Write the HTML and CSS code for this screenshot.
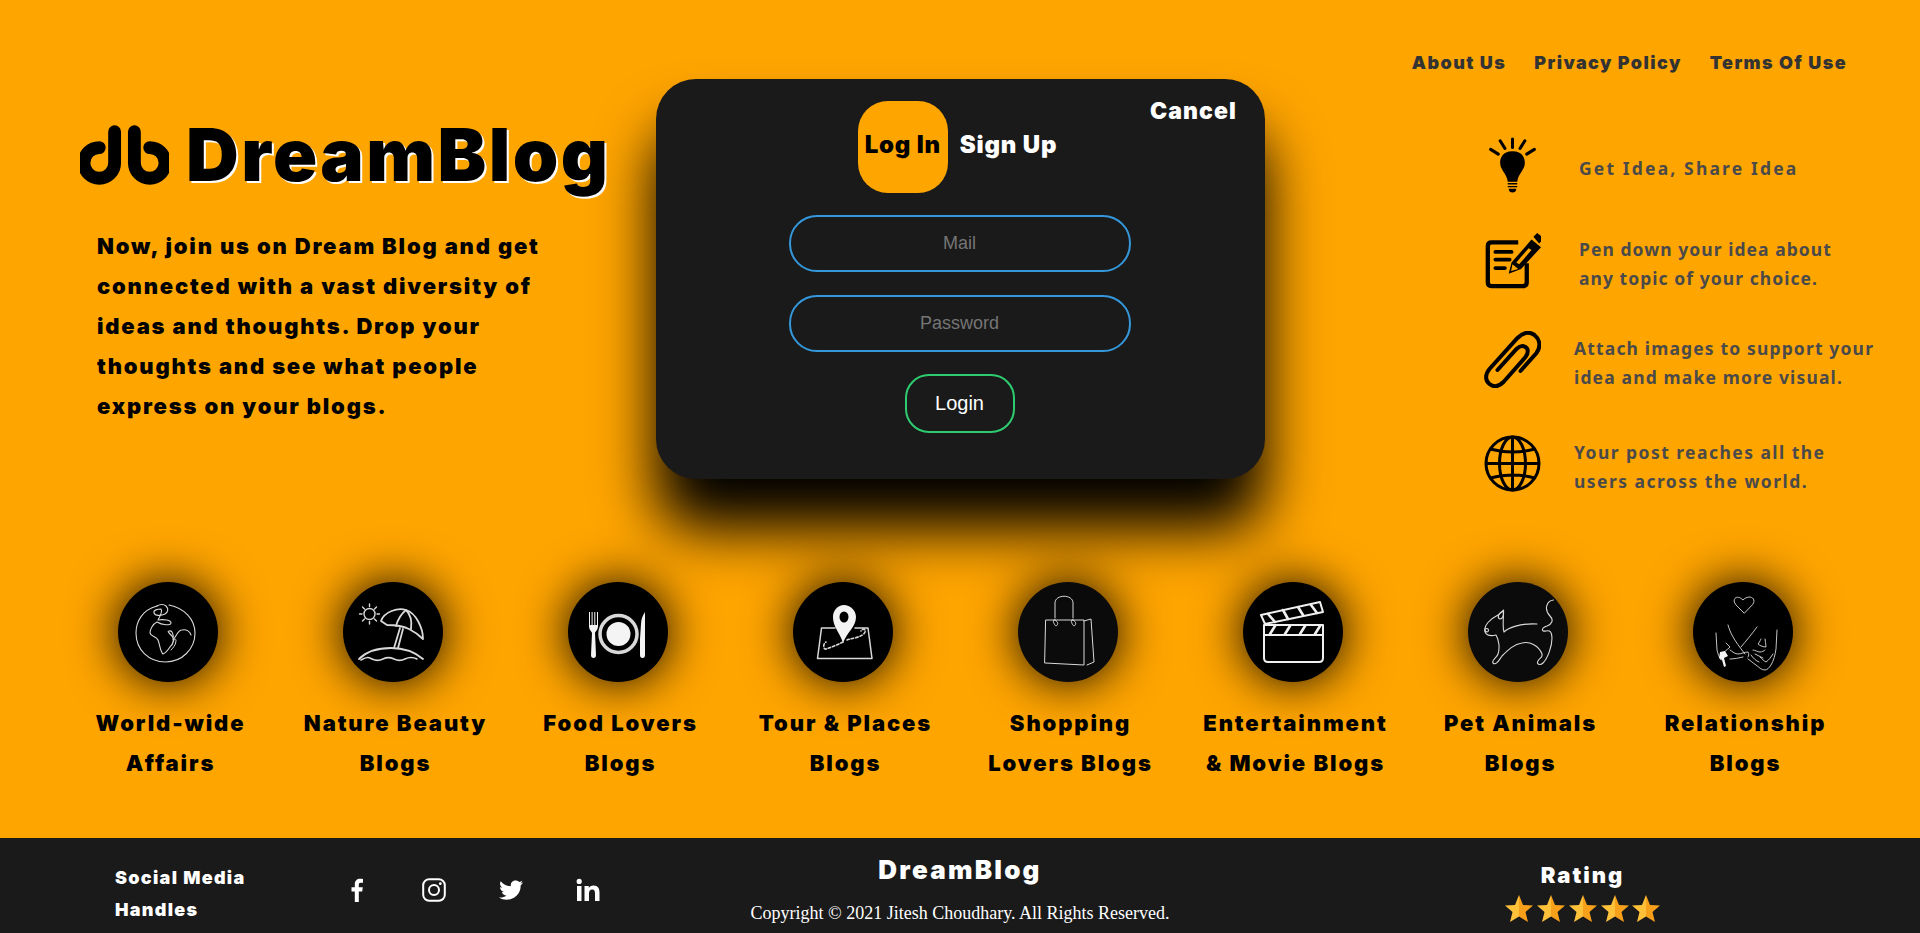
FILE: index.html
```html
<!DOCTYPE html>
<html lang="en">
<head>
<meta charset="utf-8">
<title>DreamBlog</title>
<link rel="stylesheet" href="styles.css">
</head>
<body>
<div class="page">
  <main class="top">
    <section class="intro">
      <div class="brand">
        <svg class="brand-mark" viewBox="0 0 90 60"><path d="M35 6.500V38A15.500 15.500 0 1 1 19.500 22.500M55 6.500V38A15.500 15.500 0 1 0 70.500 22.500" fill="none" stroke="#000" stroke-width="13" stroke-linecap="round"/></svg>
        <h1 class="brand-name">DreamBlog</h1>
      </div>
      <p class="intro-text">Now, join us on Dream Blog and get<br>connected with a vast diversity of<br>ideas and thoughts. Drop your<br>thoughts and see what people<br>express on your blogs.</p>
    </section>

    <section class="card">
      <span class="cancel">Cancel</span>
      <div class="tabs">
        <span class="tab tab-active">Log In</span>
        <span class="tab">Sign Up</span>
      </div>
      <form class="form">
        <input class="field" type="text" placeholder="Mail">
        <input class="field" type="password" placeholder="Password">
        <button class="submit" type="button">Login</button>
      </form>
    </section>

    <aside class="side">
      <nav class="nav">
        <a class="nav-link">About Us</a>
        <a class="nav-link">Privacy Policy</a>
        <a class="nav-link">Terms Of Use</a>
      </nav>
      <ul class="features">
        <li class="feature feature-a">
          <svg class="feature-icon" viewBox="0 0 60 60"><g fill="none" stroke="#000" stroke-width="3.200" stroke-linecap="round"><path d="M30 2V11M17 4L22 12M43 4L38 12M7 13L15 18M53 13L45 18"/></g><path d="M30 15C19 15 17 23 17 27C17 35 24 38 25 47H35C36 38 43 35 43 27C43 23 41 15 30 15Z"/><path d="M25 48.500H35V50H25ZM25 51.500H35V53H25ZM26 54.500H34C34 57.500 32 58.500 30 58.500C28 58.500 26 57.500 26 54.500Z"/></svg>
          <p class="feature-text feature-text-a">Get Idea, Share Idea</p>
        </li>
        <li class="feature feature-b">
          <svg class="feature-icon" viewBox="0 0 60 60"><path d="M36 11H8Q4 11 4 15V53Q4 57 8 57H41Q45 57 45 53V33" fill="none" stroke="#000" stroke-width="4.500"/><path d="M12 21H29M12 29H27M12 38H22" stroke="#000" stroke-width="4" stroke-linecap="round"/><path d="M26 44L29 32L50 8L60 16L39 39Z"/><path d="M30 34L36 39L28.500 41Z" fill="#ffa500"/><path d="M34 32L47 17L50 19L37 34Z" fill="#ffa500"/><path d="M52 5L56 1L61 5L60 10L58 12Z"/></svg>
          <p class="feature-text feature-text-b">Pen down your idea about<br>any topic of your choice.</p>
        </li>
        <li class="feature feature-c">
          <svg class="feature-icon" viewBox="0 0 56 57"><path d="M36 40L52 22C57 15 55 8 50 4C44 0 38 2 33 7L5 38C0 44 1 50 5 53C10 57 15 55 19 51L41 26C44 22 44 18 41 16C38 14 35 15 32 18L13 39" fill="none" stroke="#000" stroke-width="4" stroke-linecap="round"/></svg>
          <p class="feature-text feature-text-c">Attach images to support your<br>idea and make more visual.</p>
        </li>
        <li class="feature feature-d">
          <svg class="feature-icon" viewBox="0 0 57 57"><g fill="none" stroke="#000" stroke-width="3"><circle cx="28.500" cy="28.500" r="26.500"/><ellipse cx="28.500" cy="28.500" rx="13" ry="26.500"/><path d="M28.500 2V55M2 28.500H55M6 14Q28.500 20 51 14M6 43Q28.500 37 51 43"/></g></svg>
          <p class="feature-text feature-text-d">Your post reaches all the<br>users across the world.</p>
        </li>
      </ul>
    </aside>
  </main>

  <section class="cats">
    <article class="cat">
      <div class="cat-circle">
        <svg class="line-art" viewBox="0 0 100 100"><path d="M39 24C24 28 18 40 18 51C18 68 31 80 47.500 80C64 80 77 67 77 51C77 37 66 26 51 23" stroke-width="1.100"/><path d="M39 24C42 22 46 22 48 24C51 27 50 30 47 32C43 34 37 34 36 31C35 28 40 27 43 27C45 30 42 34 40 38C46 37 53 38 53 41C53 44 44 43 39 40C35 42 32 47 32 51C33 55 38 54 40 58C42 63 42 69 45 72C48 71 50 68 52 65C55 62 57 58 54 54C51 51 49 49 51 49C54 48 56 52 55 58C59 53 60 48 64 48C68 47 72 49 73 53" stroke-width="1.100"/><path d="M54 63C55 58 58 55 58 59C58 63 54 67 53 68" stroke-width="1"/></svg>
      </div>
      <h2 class="cat-title">World-wide<br>Affairs</h2>
    </article>
    <article class="cat">
      <div class="cat-circle">
        <svg class="line-art" viewBox="0 0 100 100"><g stroke-width="1.400"><circle cx="26.500" cy="32" r="5.500"/><path d="M26.500 22V24.500M26.500 39.500V42M16.500 32H19M34 32H36.500M19.500 25L21.500 27M33.500 25L31.500 27M19.500 39L21.500 37M33.500 39L31.500 37"/></g><g stroke-width="1.800"><path d="M38 39C41 30 55 25 63 28C73 31 80 46 80 57C75 52 70 49 66 47C60 44 52 43 44 43Z"/><path d="M53 44C55 37 58 32 63 28M68 47C69 40 68 33 63 28"/><path d="M57 46L51 66M60 47L55 66"/><path d="M16 77C24 69 36 66 48 66C62 66 73 71 80 77"/></g><path d="M18 78C23 75 25 75 29 77C33 79 36 79 40 77C44 75 47 75 51 77C55 79 58 79 62 77C66 75 70 75 74 77" stroke-width="1.500"/></svg>
      </div>
      <h2 class="cat-title">Nature Beauty<br>Blogs</h2>
    </article>
    <article class="cat">
      <div class="cat-circle">
        <svg class="line-art" viewBox="0 0 100 100"><path class="solid" d="M21 30H22V43H23.600V30H24.600V43H26.300V30H27.300V43H29V30H30V44C30 48 27.500 49 27 51L28 73Q28 76 25.500 76Q23 76 23 73L24 51C23.500 49 21 48 21 44Z"/><circle cx="50.500" cy="52" r="18.500" stroke-width="3.500"/><circle class="solid" cx="50.500" cy="52" r="12"/><path class="solid" d="M77 30V73Q77 76 74.500 76Q72 76 72 73V57L73 42C73 37 75 33 77 30Z"/></svg>
      </div>
      <h2 class="cat-title">Food Lovers<br>Blogs</h2>
    </article>
    <article class="cat">
      <div class="cat-circle">
        <svg class="line-art" viewBox="0 0 100 100"><path d="M42 46H28.500L24.500 76.500H79L75 46H62" stroke-width="1.500"/><path d="M50 61C46 49 40 45 40 35C40 28 45 23 51 23C57 23 63 28 63 35C63 45 54 50 50 61Z" class="solid" fill-rule="evenodd"/><ellipse cx="51" cy="35" rx="4.500" ry="5.500" fill="#000" stroke="none"/><path d="M50 60C44 63 36 66 33 67C30 68 30 61 33 60M54 58C60 56 70 55 72 50C73 47 70 46 68 49" stroke-width="1.600" stroke-dasharray="2.500 2"/></svg>
      </div>
      <h2 class="cat-title">Tour &amp; Places<br>Blogs</h2>
    </article>
    <article class="cat">
      <div class="cat-circle cat-circle-soft">
        <svg class="line-art" viewBox="0 0 100 100"><g stroke-width="1"><path d="M28 38L66 38L66 83L27 81Z"/><path d="M66 39L73 37L76 80L69 83"/><path d="M37 36V21C37 12 55 12 55 21V36"/><path d="M37 38C33 37 37 44 38 44C40 43 41 40 37 38ZM55 38C51 37 55 44 56 44C58 43 59 40 55 38Z"/></g></svg>
      </div>
      <h2 class="cat-title">Shopping<br>Lovers Blogs</h2>
    </article>
    <article class="cat">
      <div class="cat-circle">
        <svg class="line-art" viewBox="0 0 100 100"><g stroke-width="2" stroke="#f0f0f0"><path d="M21 43H80V76Q80 80 76 80H25Q21 80 21 76Z"/><path d="M21 53H80"/><path d="M18 33L77 20L80 30L22 42Z"/></g><g stroke-width="2.600" stroke="#f0f0f0"><path d="M32 44L27 52M47 44L42 52M62 44L57 52M77 44L72 52"/><path d="M25 32L32 40M40 28L45 37M55 25L60 33M68 23L74 31"/></g></svg>
      </div>
      <h2 class="cat-title">Entertainment<br>&amp; Movie Blogs</h2>
    </article>
    <article class="cat">
      <div class="cat-circle cat-circle-soft">
        <svg class="line-art" viewBox="0 0 100 100"><g stroke-width="1.100"><path d="M85.500 18C78 19 76 28 82 34C86 38 84 42 79 44C73 46 73 50 78 49C82 48 84 50 84 56C84 64 80 76 75 81C72 84 68 82 70 79C71 76 75 76 74 72C71 64 62 59 54 61C46 62 40 68 34 74C31 78 28 84 25 81C23 78 29 76 30 72C32 66 31 58 28 53C24 54 19 54 17 50C15 44 22 37 30 33C32 32 34 30 35.500 28C36 34 34 44 36 50C40 46 52 41 69 42"/><path d="M35 29C30 31 29 36 32 37C35 37 36 33 35 29"/><path d="M17 47C20 45 22 49 19 50C17 50 17 48 17 47"/></g></svg>
      </div>
      <h2 class="cat-title">Pet Animals<br>Blogs</h2>
    </article>
    <article class="cat">
      <div class="cat-circle">
        <svg class="line-art" viewBox="0 0 100 100"><g stroke-width="0.900"><path d="M51 31L43 23C38 17 44 12 50 18C56 12 64 16 60 22Z"/><path d="M35 43C37 50 40 57 52 72M64 45C59 52 53 59 48 65"/><path d="M23 51L24 68C25 72 26 75 28 78M84 48L83 67C82 73 81 78 78 83C76 86 74 88 72 88C68 88 66 85 63 83C60 81 58 79 55 77"/><path d="M33 61L37 65C34 68 31 70 28 72M37 68C40 70 42 72 45 72C48 72 52 70 55 70C56 72 56 74 55 75M60 68C62 68 65 70 67 70C69 70 71 69 72 68M68 57C67 59 66 61 65 62C67 64 71 65 73 65C73 62 72 59 72 57M67 75C69 77 71 79 73 80C76 78 78 75 80 72M37 77C41 77 46 76 50 75M58 73C60 76 63 79 66 80M62 72L70 76"/></g><path d="M27 70L32 69L35 74L31 76L33 84L31 85L29 78L26 76Z" class="solid"/></svg>
      </div>
      <h2 class="cat-title">Relationship<br>Blogs</h2>
    </article>
  </section>

  <footer class="footer">
    <h3 class="social-title">Social Media<br>Handles</h3>
    <div class="social">
      <svg class="social-icon" viewBox="0 0 24 24"><path d="M13.800 24V13.500H17.200L17.800 9.300H13.800V6.700C13.800 5.500 14.200 4.700 15.900 4.700H18V1C17.600 .9 16.400 .8 15 .8C12 .8 9.800 2.700 9.800 6.200V9.300H6.500V13.500H9.800V24Z" fill="#fff"/></svg>
      <svg class="social-icon" viewBox="0 0 24 24"><rect x="1.200" y="1.200" width="21.600" height="21.600" rx="6" fill="none" stroke="#fff" stroke-width="2"/><circle cx="12" cy="12" r="5" fill="none" stroke="#fff" stroke-width="2"/><circle cx="18.300" cy="5.700" r="1.400" fill="#fff"/></svg>
      <svg class="social-icon" viewBox="0 0 24 24"><path d="M24 4.600C23.100 5 22.200 5.300 21.200 5.400C22.200 4.800 23 3.800 23.400 2.700C22.400 3.300 21.300 3.700 20.200 3.900C18.300 1.900 15.100 1.900 13.200 3.800C12 5 11.500 6.700 11.900 8.300C8 8.100 4.300 6.200 1.700 3.200C.4 5.400 1.100 8.300 3.200 9.700C2.400 9.700 1.700 9.500 1 9.100C1 11.500 2.700 13.500 5 14C4.300 14.200 3.500 14.200 2.800 14.100C3.400 16.100 5.300 17.500 7.400 17.500C5.400 19.100 2.500 19.900 0 19.500C6.600 23.700 15.400 21.800 19.600 15.200C21.100 12.900 21.800 10.100 21.600 7.400C22.600 6.600 23.400 5.700 24 4.600Z" fill="#fff"/></svg>
      <svg class="social-icon" viewBox="0 0 24 24"><path d="M1 8H5.500V23H1ZM3.200 .8A2.600 2.600 0 1 1 3.200 6A2.600 2.600 0 0 1 3.200 .8ZM8.500 8H12.800V10.100C13.600 8.700 15.200 7.600 17.500 7.600C22 7.600 23.500 10.500 23.500 14.800V23H19V15.700C19 13.500 18.600 11.500 16.200 11.500C13.800 11.500 13 13.300 13 15.500V23H8.500Z" fill="#fff"/></svg>
    </div>
    <div class="legal">
      <h3 class="legal-name">DreamBlog</h3>
      <p class="legal-text">Copyright © 2021 Jitesh Choudhary. All Rights Reserved.</p>
    </div>
    <div class="rating">
      <h3 class="rating-title">Rating</h3>
      <svg class="stars" viewBox="0 0 157 27">
        <defs><linearGradient id="starfill" x1="0" x2="1" y1="0" y2="0"><stop offset="0.500" stop-color="#ffc13a"/><stop offset="0.500" stop-color="#f9a01b"/></linearGradient><polygon id="star" points="14,0 18,10 28,10.500 20.500,17 23,27 14,21.500 5,27 7.500,17 0,10.500 10,10" fill="url(#starfill)"/></defs>
        <use href="#star" x="1"/><use href="#star" x="33"/><use href="#star" x="65"/><use href="#star" x="97"/><use href="#star" x="128"/>
      </svg>
    </div>
  </footer>
</div>
</body>
</html>
```

FILE: styles.css
```css
* { box-sizing: border-box; }
html, body { margin: 0; padding: 0; }
body { background: #ffa500; font-family: "Inter", "Liberation Sans", sans-serif; overflow: hidden; }
h1, h2, h3, p, ul { margin: 0; padding: 0; }

.page { display: flex; flex-direction: column; height: 933px; overflow: hidden; }

.top { display: grid; grid-template-columns: 656px 609px 1fr; height: 582px; flex: none; }

.intro { padding: 125px 0 0 80px; }
.brand { display: flex; align-items: flex-start; gap: 17px; }
.brand-mark { width: 89px; height: 60px; flex: none; }
.brand-name { font: 900 73px/60px "Inter", sans-serif; letter-spacing: 2.400px; color: #000; text-shadow: 2px 2px 0 #fff; white-space: nowrap; }
.intro-text { margin: 41px 0 0 17px; font: 900 22px/40px "Inter", sans-serif; letter-spacing: 1.800px; color: #000; white-space: nowrap; }

.card { position: relative; z-index: 1; align-self: start; margin-top: 79px; height: 400px; padding-top: 22px; background: #1a1a1a; border-radius: 40px; box-shadow: 0 50px 60px #000; display: flex; flex-direction: column; align-items: center; }
.cancel { position: absolute; top: 16px; right: 28px; font: 900 23px/32px "Inter", sans-serif; letter-spacing: 1.100px; color: #fff; }
.tabs { display: flex; align-items: center; height: 92px; margin-left: 2px; }
.tab { display: flex; align-items: center; justify-content: center; height: 92px; padding: 0 8px 4px 12px; font: 900 24px/28px "Inter", sans-serif; letter-spacing: .8px; color: #fff; white-space: nowrap; }
.tab-active { width: 90px; padding: 0 0 4px; background: #ffa500; color: #000; border-radius: 30px; }
.form { display: flex; flex-direction: column; align-items: center; margin: 22px 2px 0 0; }
.field { width: 342px; height: 57px; margin-bottom: 23px; background: transparent; border: 2px solid #3498db; border-radius: 28px; text-align: center; font: 18px "Liberation Sans", sans-serif; color: #fff; outline: none; }
.field::placeholder { color: #757575; opacity: 1; }
.submit { width: 110px; height: 59px; margin-top: -1px; background: transparent; border: 2px solid #2ecc71; border-radius: 24px; font: 20px "Liberation Sans", sans-serif; color: #fff; }

.side { display: flex; flex-direction: column; }
.nav { display: flex; justify-content: flex-end; gap: 28px; padding: 52px 73px 0 0; }
.nav-link { font: 900 18px/22px "Inter", sans-serif; letter-spacing: 1.400px; color: #333; white-space: nowrap; }
.features { list-style: none; padding-left: 219px; margin-top: -1px; }
.feature { display: flex; align-items: center; height: 57px; color: #4a4a4a; }
.feature-a { margin-top: 64px; }
.feature-b { margin-top: 38px; }
.feature-c { margin-top: 42px; }
.feature-d { margin-top: 47px; }
.feature-icon { width: 57px; height: 57px; flex: none; }
.feature-text { margin-left: 33px; padding-top: 6px; font: 700 17.500px/29px "Noto Sans", sans-serif; white-space: nowrap; }
.feature-text-a { margin-left: 38px; letter-spacing: 2.150px; }
.feature-text-b { margin-left: 38px; letter-spacing: 1.050px; }
.feature-text-c { letter-spacing: 1.150px; }
.feature-text-d { letter-spacing: 1.450px; }

.cats { display: grid; grid-template-columns: repeat(8, 225px); padding-left: 55px; height: 256px; flex: none; }
.cat { display: flex; flex-direction: column; align-items: center; }
.cat-circle { width: 100px; height: 100px; flex: none; border-radius: 50%; background: #000; box-shadow: 0 0 50px #000; }
.cat-circle-soft { background: #0b0b0b; }
.line-art { display: block; width: 100px; height: 100px; fill: none; stroke: #d9d9d9; stroke-linecap: round; stroke-linejoin: round; }
.line-art .solid { fill: #f4f4f4; stroke: none; }
.cat-title { margin-top: 21px; padding-left: 6px; font: 900 22px/40px "Inter", sans-serif; letter-spacing: 1.900px; color: #000; text-align: center; white-space: nowrap; }

.footer { flex: none; height: 95px; background: #1a1a1a; color: #fff; display: grid; grid-template-columns: 230px 405px 754px 1fr; padding-left: 115px; overflow: hidden; }
.social-title { padding-top: 24px; font: 900 18px/32px "Inter", sans-serif; letter-spacing: 1.300px; white-space: nowrap; }
.social { display: flex; gap: 53px; padding-top: 40px; }
.social-icon { width: 24px; height: 24px; flex: none; }
.legal { text-align: center; width: 420px; }
.legal-name { padding-top: 17px; font: 900 26px/30px "Inter", sans-serif; letter-spacing: 2.200px; }
.legal-text { margin-top: 17px; font: 18px/22px "Liberation Serif", serif; white-space: nowrap; }
.rating { display: flex; flex-direction: column; align-items: center; width: 157px; }
.rating-title { padding-top: 22px; font: 900 22px/30px "Inter", sans-serif; letter-spacing: 2px; }
.stars { display: block; width: 157px; height: 27px; margin-top: 5px; }
```
